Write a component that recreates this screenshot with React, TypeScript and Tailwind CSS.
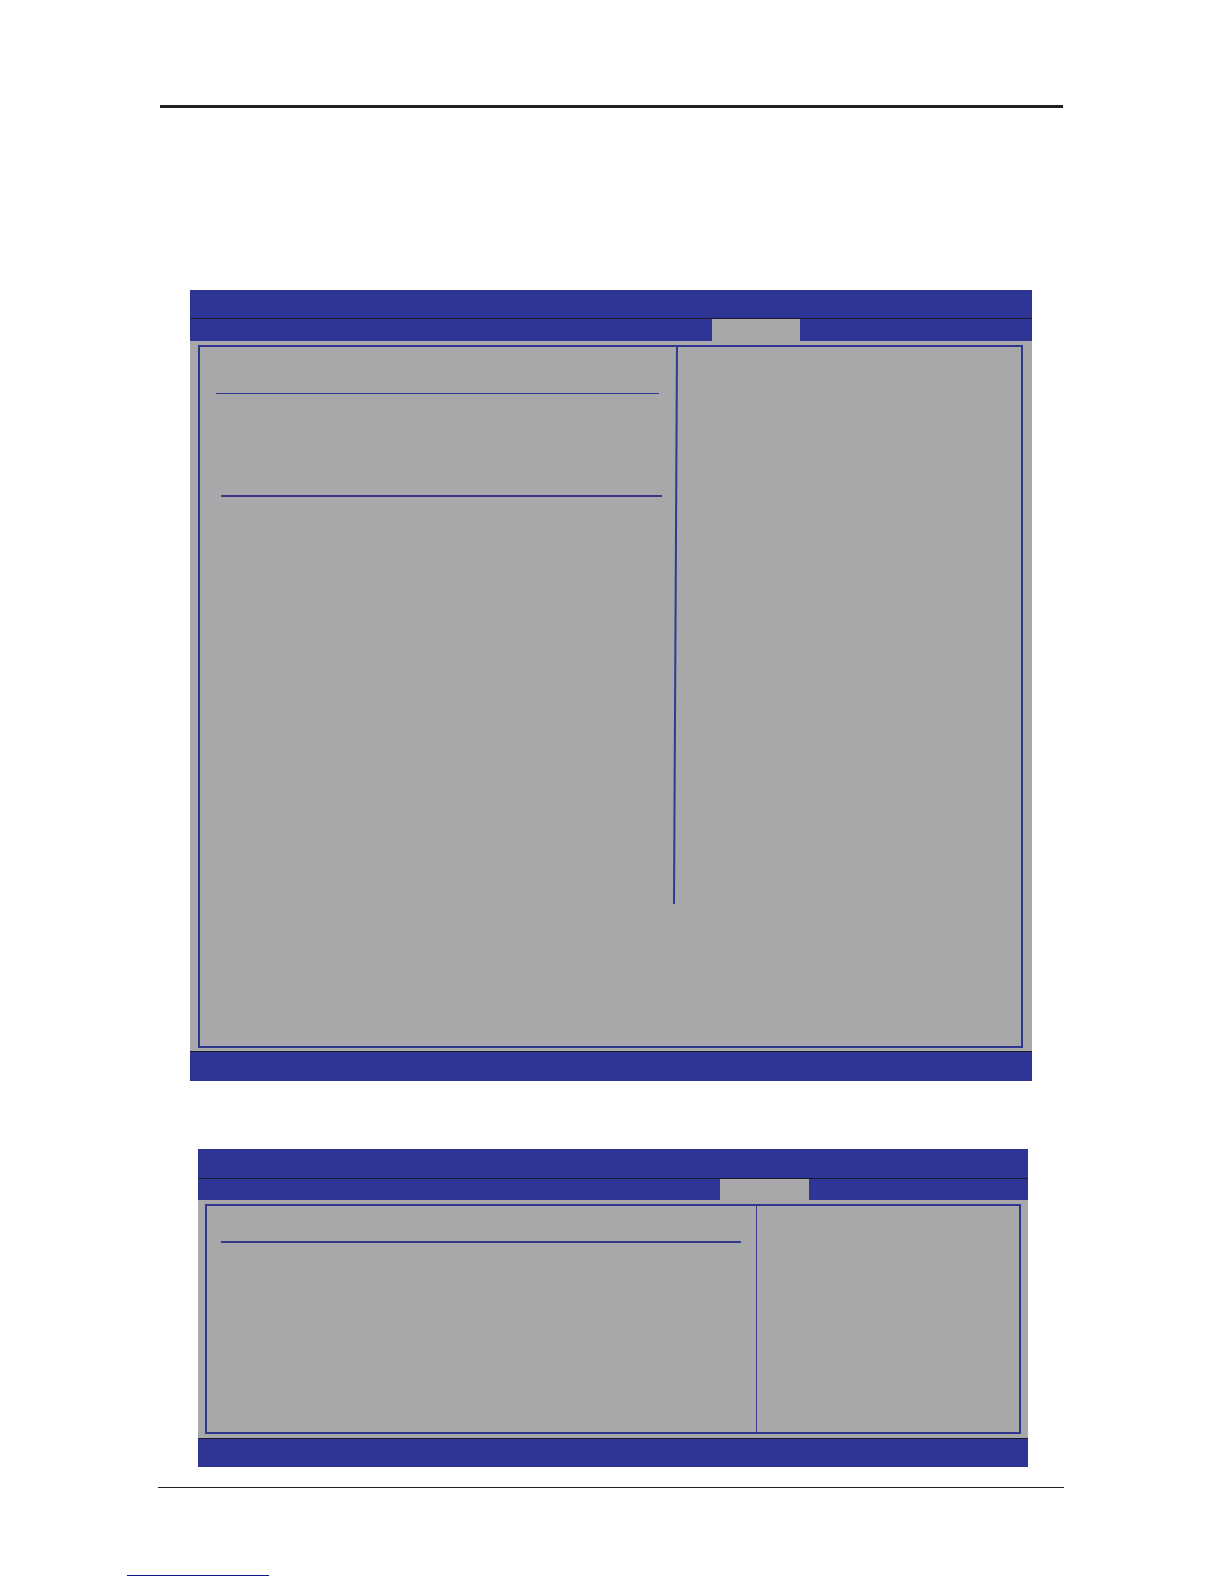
import { FC, ReactNode } from "react";

interface IScreenProps {
	className: string;
	titleClassName: string;
	menuClassName: string;
	tabClassName: string;
	bodyClassName: string;
	footerClassName: string;
	children: ReactNode;
}

const SetupScreen: FC<IScreenProps> = ({
	className,
	titleClassName,
	menuClassName,
	tabClassName,
	bodyClassName,
	footerClassName,
	children,
}) => {
	return (
		<section className={`bg-[#a8a8aa] ${className}`}>
			<header>
				<div className={`border-b border-[#1a1a2c] bg-[#2e3594] ${titleClassName}`} />
				<nav className={`flex justify-end bg-[#2e3594] ${menuClassName}`}>
					<div className={`bg-[#a8a8aa] ${tabClassName}`} />
				</nav>
			</header>

			<div className={bodyClassName}>
				<div className="flex border-2 border-[#2e3690]">{children}</div>
			</div>

			<footer className={`border-t border-[#1a1a2c] bg-[#2e3594] ${footerClassName}`} />
		</section>
	);
};

const App: FC = () => {
	return (
		<main className="bg-white pt-[105px] pb-2 font-['Liberation_Sans',sans-serif]">
			<hr className="mr-[161px] ml-[160px] h-[3px] border-0 bg-[#1f1f21]" />

			<SetupScreen
				className="mt-[182px] mr-48 ml-[190px]"
				titleClassName="h-[29px]"
				menuClassName="h-[22px] pr-[232px]"
				tabClassName="w-[88px]"
				bodyClassName="pt-1 pr-[9px] pb-[3px] pl-2"
				footerClassName="h-[30px]">
				<div className="min-h-[699px] flex-1">
					<hr className="mt-[46px] mr-[14px] ml-4 h-px border-0 bg-[#2e3690]" />
					<hr className="mt-[101px] mr-[11px] ml-[21px] h-[2px] border-0 bg-[#3b3785]" />
				</div>
				{/* divider leans slightly to the left on its way down */}
				<svg className="h-[557px] w-[5px]" viewBox="0 0 5 557" aria-hidden="true">
					<line x1="4" y1="0" x2="1" y2="557" stroke="#2c3c92" strokeWidth="2" />
				</svg>
				<div className="w-[343px]" />
			</SetupScreen>

			<SetupScreen
				className="mt-[68px] mr-[196px] ml-[198px]"
				titleClassName="h-[30px]"
				menuClassName="h-[21px] pr-[219px]"
				tabClassName="w-[89px]"
				bodyClassName="px-[7px] py-1"
				footerClassName="h-[29px]">
				<div className="min-h-[226px] flex-1">
					<hr className="mt-[35px] mr-[15px] ml-[14px] h-[2px] border-0 bg-[#2e3a85]" />
				</div>
				<div className="w-[263px] border-l border-[#3a3890]" />
			</SetupScreen>

			<hr className="mt-5 mr-40 ml-[158px] h-px border-0 bg-[#1f1f21]" />
			<hr className="mt-[87px] ml-[127px] h-px w-[142px] border-0 bg-[#0a1a8c]" />
		</main>
	);
};

export default App;
